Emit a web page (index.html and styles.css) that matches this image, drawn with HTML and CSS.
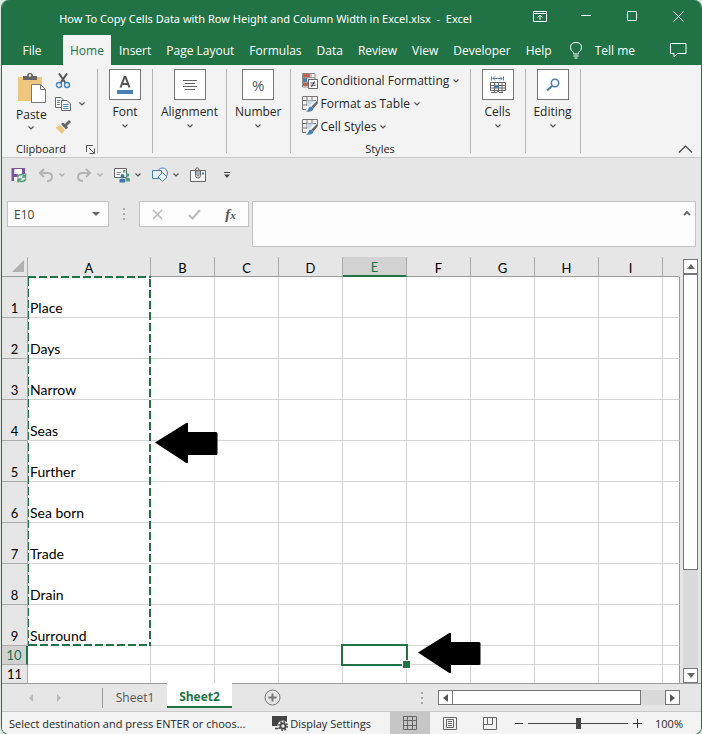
FILE: index.html
```html
<!DOCTYPE html>
<html lang="en">
<head>
    <meta charset="UTF-8">
    <meta name="viewport" content="width=device-width, initial-scale=1.0">
    <title>Excel</title>
    <link rel="stylesheet" href="styles.css">
</head>
<body>
    <svg class="defs" aria-hidden="true">
        <symbol id="chevron" viewBox="0 0 6 4"><path d="M.5 .5L3 3L5.500 .5" fill="none" stroke="#555" stroke-width="1.200"/></symbol>
        <symbol id="block-arrow" viewBox="0 0 64 42"><path d="M1 20.500L31.500 1.500Q34 0 34 2V10H62Q63.500 10 63.500 11.500V31.500Q63.500 33 62 33H34V40Q34 42 31.500 40.500Z" fill="#000"/></symbol>
        <symbol id="table-brush" viewBox="0 0 16 16">
            <path d="M.5 .5H15.500V5M.5 .5V13.500H4M.5 4.500H14M.5 9H7M5 .5V10M10 .5V6" fill="none" stroke="#777"/>
            <path d="M5 4.500H12L7 10H5Z" fill="#c3d9ee"/>
            <path d="M15.500 4.500L9.500 10.500L11.500 12.500L16 7Z" fill="#666"/>
            <path d="M9 10.500Q12 11.500 11 14Q9 16.500 4 15.500Q6.500 14.500 6.500 12.500Q7 10.500 9 10.500Z" fill="#4a7eb5"/>
        </symbol>
    </svg>

    <div class="window">
        <div class="titlebar">
            <div class="title">How To Copy Cells Data with Row Height and Column Width in Excel.xlsx&nbsp; -&nbsp; Excel</div>
            <button class="win-btn" aria-label="Ribbon display options"><svg width="14" height="12" viewBox="0 0 14 12" fill="none" stroke="#fff"><path d="M.5 1.500H13.500V11.500H.5ZM.5 3.500H13.500M7 10V5.500M4.500 7.500L7 5L9.500 7.500"/></svg></button>
            <button class="win-btn" aria-label="Minimize"><svg width="10" height="10" viewBox="0 0 10 10" stroke="#fff"><path d="M0 4.500H10"/></svg></button>
            <button class="win-btn" aria-label="Maximize"><svg width="10" height="10" viewBox="0 0 10 10" fill="none" stroke="#fff"><path d="M.5 .5H9.500V9.500H.5Z"/></svg></button>
            <button class="win-btn" aria-label="Close"><svg width="11" height="11" viewBox="0 0 11 11" stroke="#fff"><path d="M.5 .5L10.500 10.500M10.500 .5L.5 10.500"/></svg></button>
        </div>

        <div class="tabs">
            <button class="tab file">File</button>
            <button class="tab active">Home</button>
            <button class="tab">Insert</button>
            <button class="tab">Page Layout</button>
            <button class="tab">Formulas</button>
            <button class="tab">Data</button>
            <button class="tab">Review</button>
            <button class="tab">View</button>
            <button class="tab">Developer</button>
            <button class="tab">Help</button>
            <button class="tab tell-me"><svg width="12" height="17" viewBox="0 0 12 17" fill="none" stroke="#fff"><path d="M3.500 12V10.500Q.5 8.500 .5 5.500Q.5 .5 6 .5Q11.500 .5 11.500 5.500Q11.500 8.500 8.500 10.500V12ZM3.500 14H8.500M4.500 16H7.500"/></svg>Tell me</button>
            <button class="comment" aria-label="Comments"><svg width="17" height="15" viewBox="0 0 17 15" fill="none" stroke="#fff"><path d="M.5 .5H16V10.500H7.500L4 14V10.500H.5Z"/></svg></button>
        </div>

        <div class="ribbon">
            <div class="group clipboard">
                <div class="clip-tools">
                    <button class="paste">
                        <svg width="29" height="31" viewBox="0 0 29 31">
                            <path d="M1 4H25V28H1Z" fill="#edc77d"/>
                            <path d="M6 3H10Q10 0 13 0T16 3H20V7H6Z" fill="#666"/>
                            <circle cx="13" cy="2.500" r="1.200" fill="#f3f3f3"/>
                            <path d="M14.500 11.500H23.500L28.500 16.500V29.500H14.500Z" fill="#fff" stroke="#777"/>
                            <path d="M23.500 11.500V16.500H28.500" fill="none" stroke="#777"/>
                        </svg>
                        <span>Paste</span>
                        <svg class="chev"><use href="#chevron"/></svg>
                    </button>
                    <div class="clip-side">
                        <button aria-label="Cut"><svg width="16" height="16" viewBox="0 0 16 16" fill="none">
                            <path d="M4 .5L10.500 10M12 .5L5.500 10" stroke="#555" stroke-width="2"/>
                            <circle cx="4" cy="12" r="2.500" stroke="#4a86c0" stroke-width="1.400"/><circle cx="12" cy="12" r="2.500" stroke="#4a86c0" stroke-width="1.400"/>
                        </svg></button>
                        <button aria-label="Copy"><svg width="16" height="16" viewBox="0 0 16 16" fill="#fff" stroke="#666">
                            <path d="M.5 1.500H6L8.500 4V11.500H.5Z"/><path d="M6.500 4.500H12L15.500 8V14.500H6.500Z"/>
                            <path d="M2 4.500H5M2 6.500H5M2 8.500H5M8 8.500H13.500M8 10.500H13.500M8 12.500H13.500" stroke="#4a86c0"/>
                        </svg><svg class="chev"><use href="#chevron"/></svg></button>
                        <button aria-label="Format Painter"><svg width="16" height="16" viewBox="0 0 16 16">
                            <path d="M5 6L10 11L7 15L.5 8.500Z" fill="#edc77d"/>
                            <path d="M6 5L8 3.500L10 5L14 1L16 3L12 7L13 8.500L11 10.500Z" fill="#666"/>
                        </svg></button>
                    </div>
                </div>
                <div class="group-label">Clipboard
                    <button class="launcher" aria-label="Clipboard settings"><svg width="9" height="9" viewBox="0 0 9 9" fill="none" stroke="#555"><path d="M.5 7V.5H7M3 3L8 8M8.500 3.500V8.500H3.500"/></svg></button>
                </div>
            </div>
            <div class="group narrow">
                <button class="big"><span class="box"><svg width="18" height="20" viewBox="0 0 18 20"><path d="M4.500 12.500L8.500 2H9.500L13.500 12.500M6 9H12" fill="none" stroke="#555" stroke-width="2"/><path d="M1 15H17V19H1Z" fill="#4a7fb5"/></svg></span>Font<svg class="chev"><use href="#chevron"/></svg></button>
            </div>
            <div class="group">
                <button class="big"><span class="box"><svg width="14" height="12" viewBox="0 0 14 12" stroke="#666"><path d="M0 1.500H14M2 4.500H12M0 7.500H14M2 10.500H12"/></svg></span>Alignment<svg class="chev"><use href="#chevron"/></svg></button>
            </div>
            <div class="group">
                <button class="big"><span class="box percent">%</span>Number<svg class="chev"><use href="#chevron"/></svg></button>
            </div>
            <div class="group styles">
                <button class="row"><svg width="16" height="16" viewBox="0 0 16 16">
                    <path d="M.5 .5H13V14H.5Z" fill="#fff" stroke="#888"/>
                    <path d="M1 1H8V4.500H1ZM1 9.500H6V13H1Z" fill="#c0604f"/><path d="M1 5H5V9H1Z" fill="#4a7fb5"/>
                    <path d="M9 1V5M.5 4.800H13M.5 9.200H6" stroke="#888" fill="none"/>
                    <path d="M6.500 6.500H15.500V15.500H6.500Z" fill="#fff" stroke="#666"/><path d="M8.500 10H13.500M8.500 12.200H13.500M12.500 8.500L9.500 14" stroke="#444"/>
                </svg>Conditional Formatting<svg class="chev"><use href="#chevron"/></svg></button>
                <button class="row"><svg width="16" height="16"><use href="#table-brush"/></svg>Format as Table<svg class="chev"><use href="#chevron"/></svg></button>
                <button class="row"><svg width="16" height="16"><use href="#table-brush"/></svg>Cell Styles<svg class="chev"><use href="#chevron"/></svg></button>
                <div class="group-label">Styles</div>
            </div>
            <div class="group narrow">
                <button class="big"><span class="box"><svg width="16" height="18" viewBox="0 0 16 18" fill="none">
                    <path d="M1.500 .5V4.500M13.500 .5V4.500M3 2.500H12M5 .5L3 2.500L5 4.500M10 .5L12 2.500L10 4.500" stroke="#4a7fb5"/>
                    <path d="M.5 6.500H15.500V14.500H.5ZM.5 9.500H15.500M.5 12H15.500M4.500 6.500V16M8.500 6.500V14.500M12 6.500V16M1 16.500H7L8 15L9 16.500H13" stroke="#666"/>
                    <path d="M4.500 9H8.500V12H4.500Z" fill="#4a7fb5"/>
                </svg></span>Cells<svg class="chev"><use href="#chevron"/></svg></button>
            </div>
            <div class="group narrow">
                <button class="big"><span class="box"><svg width="14" height="14" viewBox="0 0 14 14" fill="none" stroke="#4a7fb5"><circle cx="9" cy="5" r="3.700" stroke-width="1.600"/><path d="M6 8L1 12.500" stroke-width="2.200"/></svg></span>Editing<svg class="chev"><use href="#chevron"/></svg></button>
            </div>
            <button class="collapse" aria-label="Collapse the ribbon"><svg width="15" height="8" viewBox="0 0 15 8" fill="none" stroke="#444" stroke-width="1.200"><path d="M1 7.500L7.500 1L14 7.500"/></svg></button>
        </div>

        <div class="quick">
            <button aria-label="Save"><svg width="16" height="16" viewBox="0 0 16 16">
                <path d="M.5 1H14V7H11V2.500H3.500V7H7L5 14H.5Z" fill="#8052a0"/><path d="M3.500 2H11V7H3.500Z" fill="#fff"/><path d="M3 10H6V14H3Z" fill="#fff"/>
                <path d="M6.500 10.500Q7 7.500 10.500 7.500Q13 7.500 14 9.500M14.500 6.500V10H11M15 11.500Q14 14.500 11 14.500Q8 14.500 7.500 12.500M7 15.500V12H10.500" fill="none" stroke="#4fa07c" stroke-width="1.500"/>
            </svg></button>
            <button class="split" aria-label="Undo"><svg width="16" height="14" viewBox="0 0 16 14" fill="none" stroke="#b4b4b4" stroke-width="2"><path d="M6 1L2 5L6 9M2 5H9.500Q14 5 14 9T9 13"/></svg><svg class="chev off"><use href="#chevron"/></svg></button>
            <button class="split" aria-label="Redo"><svg width="16" height="14" viewBox="0 0 16 14" fill="none" stroke="#b4b4b4" stroke-width="2"><path d="M10 1L14 5L10 9M14 5H6.500Q2 5 2 9T7 13"/></svg><svg class="chev off"><use href="#chevron"/></svg></button>
            <button class="split" aria-label="Mail merge"><svg width="16" height="16" viewBox="0 0 16 16">
                <path d="M.5 1.500H12.500V10.500H.5Z" fill="#fff" stroke="#666"/><path d="M2.500 5.500H7M2.500 7.500H6" stroke="#888"/><path d="M9 3H11.500V5.500H9Z" fill="#4fa07c"/>
                <circle cx="8.500" cy="9" r="2" fill="#3f73a8"/><path d="M5.500 15.500V13Q5.500 11.500 8.500 11.500T11 13V15.500Z" fill="#3f73a8"/>
                <circle cx="13.500" cy="8" r="1.800" fill="#4fa07c"/><path d="M11.500 14.500V11.500Q12 10.500 13.500 10.500T16 12V14.500Z" fill="#4fa07c"/>
            </svg><svg class="chev"><use href="#chevron"/></svg></button>
            <button class="split" aria-label="Shapes"><svg width="16" height="16" viewBox="0 0 16 16" fill="#e9f1f9" stroke="#4a7fb5">
                <circle cx="10.500" cy="6" r="5"/><path d="M.5 3.500H9.500V11.500H.5Z"/><path d="M10.500 5.500L15 10L10.500 14.500L6 10Z"/>
            </svg><svg class="chev"><use href="#chevron"/></svg></button>
            <button aria-label="Attach"><svg width="16" height="15" viewBox="0 0 16 15" fill="none" stroke="#666">
                <path d="M.5 3.500H15.500V14.500H.5Z" fill="#f5f5f5"/><path d="M10.500 3V8.500Q10.500 11 8 11T5.500 8.500V3Q5.500 .8 7.200 .8T9 3V8Q9 9 8 9T7 8V3.500"/><path d="M12 6.500H14" stroke="#4a7fb5" stroke-width="2"/>
            </svg></button>
            <button class="customize" aria-label="Customize toolbar"><svg width="6" height="6" viewBox="0 0 6 6"><path d="M0 .5H6" stroke="#444"/><path d="M0 2.500H6L3 6Z" fill="#444"/></svg></button>
        </div>

        <div class="formula-bar">
            <div class="name-box">
                <input type="text" value="E10" aria-label="Name box">
                <button aria-label="Named ranges"><svg width="8" height="4" viewBox="0 0 8 4"><path d="M0 0H8L4 4Z" fill="#666"/></svg></button>
            </div>
            <div class="grip"></div>
            <div class="fx-box">
                <button aria-label="Cancel"><svg width="11" height="11" viewBox="0 0 11 11" stroke="#bbb" stroke-width="1.600"><path d="M1 1L10 10M10 1L1 10"/></svg></button>
                <button aria-label="Enter"><svg width="13" height="11" viewBox="0 0 13 11" fill="none" stroke="#bbb" stroke-width="2"><path d="M1 6L4.500 9.500L12 1"/></svg></button>
                <button class="fx" aria-label="Insert function">f<small>x</small></button>
            </div>
            <div class="formula">
                <input type="text" aria-label="Formula">
                <button aria-label="Collapse formula bar"><svg width="8" height="6" viewBox="0 0 8 6" fill="none" stroke="#666" stroke-width="1.800"><path d="M1 5L4 2L7 5"/></svg></button>
            </div>
        </div>

        <div class="sheet">
            <div class="grid">
                <table>
                    <colgroup><col class="col-head"><col class="col-a"><col class="col"><col class="col"><col class="col"><col class="col"><col class="col"><col class="col"><col class="col"><col class="col"><col></colgroup>
                    <thead>
                        <tr><th class="corner"><svg width="12" height="12" viewBox="0 0 12 12"><path d="M12 0V12H0Z" fill="#b1b1b1"/></svg></th><th>A</th><th>B</th><th>C</th><th>D</th><th class="on">E</th><th>F</th><th>G</th><th>H</th><th>I</th><th></th></tr>
                    </thead>
                    <tbody>
                        <tr><th>1</th><td>Place</td><td></td><td></td><td></td><td></td><td></td><td></td><td></td><td></td><td></td></tr>
                        <tr><th>2</th><td>Days</td><td></td><td></td><td></td><td></td><td></td><td></td><td></td><td></td><td></td></tr>
                        <tr><th>3</th><td>Narrow</td><td></td><td></td><td></td><td></td><td></td><td></td><td></td><td></td><td></td></tr>
                        <tr><th>4</th><td>Seas</td><td></td><td></td><td></td><td></td><td></td><td></td><td></td><td></td><td></td></tr>
                        <tr><th>5</th><td>Further</td><td></td><td></td><td></td><td></td><td></td><td></td><td></td><td></td><td></td></tr>
                        <tr><th>6</th><td>Sea born</td><td></td><td></td><td></td><td></td><td></td><td></td><td></td><td></td><td></td></tr>
                        <tr><th>7</th><td>Trade</td><td></td><td></td><td></td><td></td><td></td><td></td><td></td><td></td><td></td></tr>
                        <tr><th>8</th><td>Drain</td><td></td><td></td><td></td><td></td><td></td><td></td><td></td><td></td><td></td></tr>
                        <tr><th>9</th><td>Surround</td><td></td><td></td><td></td><td></td><td></td><td></td><td></td><td></td><td></td></tr>
                        <tr class="short"><th class="on">10</th><td></td><td></td><td></td><td></td><td></td><td></td><td></td><td></td><td></td><td></td></tr>
                        <tr class="short"><th>11</th><td></td><td></td><td></td><td></td><td></td><td></td><td></td><td></td><td></td><td></td></tr>
                    </tbody>
                </table>
                <!-- copied range A1:A9 -->
                <svg class="ants" width="123" height="370" viewBox="0 0 123 370" stroke="#217346" fill="none">
                    <path d="M0 0V370M0 1H123M122 0V370M0 369H123" stroke="#fff" stroke-width="2"/>
                    <path d="M.5 2V370" stroke-dasharray="8 3"/>
                    <path d="M0 1H123" stroke-width="2" stroke-dasharray="8 3"/>
                    <path d="M122 3V370M1 369H123" stroke-width="2" stroke-dasharray="8 3"/>
                </svg>
                <div class="selection"></div>
                <svg class="arrow range-arrow"><use href="#block-arrow"/></svg>
                <svg class="arrow cell-arrow"><use href="#block-arrow"/></svg>
            </div>
            <div class="vscroll">
                <button aria-label="Scroll up"><svg width="8" height="5" viewBox="0 0 8 5"><path d="M0 5L4 0L8 5Z" fill="#666"/></svg></button>
                <div class="thumb"></div>
                <div class="track"></div>
                <button aria-label="Scroll down"><svg width="8" height="5" viewBox="0 0 8 5"><path d="M0 0L4 5L8 0Z" fill="#666"/></svg></button>
            </div>
        </div>

        <div class="sheet-tabs">
            <button class="nav" aria-label="Previous sheet"><svg width="4" height="8" viewBox="0 0 4 8"><path d="M4 0V8L0 4Z" fill="#bbb"/></svg></button>
            <button class="nav" aria-label="Next sheet"><svg width="4" height="8" viewBox="0 0 4 8"><path d="M0 0V8L4 4Z" fill="#bbb"/></svg></button>
            <button class="sheet-tab">Sheet1</button>
            <button class="sheet-tab active">Sheet2</button>
            <button class="add" aria-label="New sheet"><svg width="17" height="17" viewBox="0 0 17 17" fill="none" stroke="#777"><circle cx="8.500" cy="8.500" r="7.500"/><path d="M8.500 4.500V12.500M4.500 8.500H12.500" stroke-width="2"/></svg></button>
            <div class="grip"></div>
            <div class="hscroll">
                <button aria-label="Scroll left"><svg width="5" height="8" viewBox="0 0 5 8"><path d="M5 0V8L0 4Z" fill="#555"/></svg></button>
                <div class="thumb"></div>
                <div class="track"></div>
                <button aria-label="Scroll right"><svg width="5" height="8" viewBox="0 0 5 8"><path d="M0 0V8L5 4Z" fill="#555"/></svg></button>
            </div>
        </div>

        <div class="status">
            <div class="message">Select destination and press ENTER or choos...</div>
            <button class="display"><svg width="16" height="16" viewBox="0 0 16 16">
                <path d="M0 1H15V7Q9 5 7 11H0Z" fill="#444"/><path d="M3 13.500H7" stroke="#444" stroke-width="1.500"/>
                <circle cx="11" cy="11" r="4" fill="none" stroke="#f3f3f3" stroke-width="3"/>
                <circle cx="11" cy="11" r="2.600" fill="none" stroke="#444" stroke-width="1.800"/><circle cx="11" cy="11" r="4.200" fill="none" stroke="#444" stroke-width="1.600" stroke-dasharray="1.700 1.600"/>
            </svg>Display Settings</button>
            <button class="view active" aria-label="Normal"><svg width="14" height="14" viewBox="0 0 14 14" fill="none" stroke="#666"><path d="M.5 .5H13.500V13.500H.5ZM.5 4.500H13.500M.5 9.500H13.500M4.500 .5V13.500M9.500 .5V13.500"/></svg></button>
            <button class="view" aria-label="Page Layout"><svg width="14" height="13" viewBox="0 0 14 13" fill="none" stroke="#666"><path d="M.5 .5H13.500V12.500H.5ZM3.500 2.500H10.500V10.500H3.500ZM5 4.500H9M5 6.500H9M5 8.500H9"/></svg></button>
            <button class="view" aria-label="Page Break Preview"><svg width="14" height="13" viewBox="0 0 14 13" fill="none" stroke="#666"><path d="M.5 .5H13.500V12.500H.5ZM4.500 .5V7.500H9.500V.5M.5 7.500H4.500" /></svg></button>
            <div class="zoom">
                <button aria-label="Zoom out"><svg width="8" height="9" viewBox="0 0 8 9" stroke="#333"><path d="M0 4.500H8"/></svg></button>
                <input type="range" min="0" max="100" value="50" aria-label="Zoom">
                <button aria-label="Zoom in"><svg width="9" height="9" viewBox="0 0 9 9" stroke="#333"><path d="M0 4.500H9M4.500 0V9"/></svg></button>
                <span class="percent-value">100%</span>
            </div>
        </div>
    </div>
</body>
</html>
```
FILE: styles.css
```css
* {
    box-sizing: border-box;
}

body {
    margin: 0;
    background: #dce8e0;
    font-family: "Open Sans", "Noto Sans", sans-serif;
    font-size: 12px;
    color: #262626;
}

button, input {
    font: inherit;
    color: inherit;
    margin: 0;
    padding: 0;
    border: none;
    background: none;
}

svg {
    display: block;
    flex: none;
}

.defs {
    position: absolute;
    width: 0;
    height: 0;
}

.window {
    margin-left: 1px;
    border: 1px solid #217346;
    border-top: none;
    border-radius: 8px;
    overflow: hidden;
    background: #e6e6e6;
}

.chev {
    width: 6px;
    height: 4px;
}

.chev.off {
    opacity: 0.4;
}

/* title bar */
.titlebar {
    display: flex;
    height: 35px;
    background: #217346;
    color: #fff;
}

.title {
    flex: 1;
    padding-left: 12px;
    text-align: center;
    line-height: 37px;
    font-family: "Noto Sans", sans-serif;
    font-size: 11px;
    white-space: nowrap;
}

.win-btn {
    width: 46px;
    display: flex;
    align-items: center;
    justify-content: center;
    padding-bottom: 3px;
}

.tabs {
    display: flex;
    height: 30px;
    background: #217346;
}

.tab {
    padding: 0 7px;
    margin-right: 1px;
    color: #fff;
    white-space: nowrap;
}

.tab.file {
    width: 60px;
}

.tab.active {
    background: #f3f3f3;
    color: #217346;
}

.tell-me {
    display: flex;
    align-items: center;
    gap: 13px;
    padding-left: 10px;
}

.comment {
    margin-left: auto;
    padding-right: 14px;
}

/* ribbon */
.ribbon {
    display: flex;
    height: 93px;
    padding: 4px 0;
    background: #f3f3f3;
    border-bottom: 1px solid #c8c8c8;
}

.group {
    display: flex;
    flex-direction: column;
    padding: 0 8px;
    border-right: 1px solid #b5b5b5;
}

.group.narrow {
    width: 55px;
}

.group-label {
    margin-top: auto;
    font-size: 11px;
    line-height: 12px;
    text-align: center;
    margin-bottom: -2px;
}

.clipboard {
    width: 96px;
    padding: 0 2px 0 14px;
}

.clip-tools {
    display: flex;
    gap: 8px;
}

.paste {
    display: flex;
    flex-direction: column;
    align-items: center;
    padding-top: 4px;
    line-height: 22px;
}

.clip-side {
    display: flex;
    flex-direction: column;
}

.clip-side button {
    display: flex;
    align-items: center;
    gap: 8px;
    height: 23px;
}

.clipboard .group-label {
    display: flex;
    justify-content: space-between;
    align-items: center;
}

.big {
    display: flex;
    flex-direction: column;
    align-items: center;
    line-height: 24px;
}

.box {
    width: 32px;
    height: 31px;
    display: flex;
    align-items: center;
    justify-content: center;
    background: #fff;
    border: 1px solid #777;
}

.percent {
    font-size: 15px;
    color: #555;
}

.styles {
    width: 180px;
    padding: 0 11px;
}

.row {
    display: flex;
    align-items: center;
    gap: 3px;
    height: 23px;
    white-space: nowrap;
}

.row .chev {
    margin-left: 1px;
}

.collapse {
    margin-left: auto;
    align-self: flex-end;
    padding-right: 8px;
}

/* quick access toolbar */
.quick {
    display: flex;
    align-items: center;
    gap: 11px;
    height: 35px;
    padding: 0 0 2px 9px;
}

.quick .split {
    display: flex;
    align-items: center;
    gap: 5px;
}

.customize {
    margin-left: 7px;
}

/* formula bar */
.formula-bar {
    display: flex;
    align-items: flex-start;
    height: 64px;
    padding: 8px 5px;
}

.name-box, .fx-box {
    display: flex;
    align-items: center;
    height: 26px;
    background: #fdfdfd;
    border: 1px solid #c3c3c3;
}

.name-box {
    width: 102px;
}

.name-box input {
    flex: 1;
    min-width: 0;
    padding-left: 6px;
    color: #444;
}

.name-box button {
    padding: 0 8px;
}

.grip {
    width: 2px;
    height: 12px;
    background: repeating-linear-gradient(#aaa 0 2px, transparent 2px 5px);
}

.formula-bar .grip {
    margin: 7px 14px;
}

.fx-box {
    width: 110px;
    justify-content: space-around;
}

.fx {
    font-family: "Liberation Serif", serif;
    font-style: italic;
    font-weight: bold;
    font-size: 15px;
    color: #555;
}

.fx small {
    font-size: 11px;
}

.formula {
    flex: 1;
    display: flex;
    align-items: flex-start;
    height: 46px;
    margin-left: 3px;
    background: #fdfdfd;
    border: 1px solid #c3c3c3;
}

.formula input {
    flex: 1;
    min-width: 0;
    height: 24px;
    padding: 0 8px;
}

.formula button {
    padding: 8px 4px;
}

/* grid */
.sheet {
    display: flex;
    gap: 3px;
    padding-right: 3px;
    border-bottom: 1px solid #9b9b9b;
}

.grid {
    flex: 1;
    min-width: 0;
    position: relative;
}

table {
    width: 100%;
    table-layout: fixed;
    border-collapse: separate;
    border-spacing: 0;
    font-family: Lato, sans-serif;
    font-size: 14px;
    line-height: 18px;
    color: #000;
}

.col-head {
    width: 26px;
}

.col-a {
    width: 123px;
}

.col {
    width: 64px;
}

th, td {
    padding: 0;
    height: 41px;
    border-right: 1px solid #d4d4d4;
    border-bottom: 1px solid #d4d4d4;
    vertical-align: bottom;
}

th {
    font-size: 13px;
    font-weight: normal;
    background: #e6e6e6;
    border-color: #ababab;
}

td {
    padding-left: 2px;
    background: #fff;
}

td:last-child {
    border-right-color: #9b9b9b;
}

thead th {
    height: 20px;
    line-height: 16px;
    border-bottom-color: #9b9b9b;
}

thead th:last-child {
    border-right-color: #e6e6e6;
}

.short th, .short td {
    height: 19px;
}

.short:last-child th, .short:last-child td {
    height: 18px;
    border-bottom: none;
}

th.on {
    background: #d2d2d2;
    color: #217346;
}

thead th.on {
    border-bottom: 2px solid #217346;
}

tbody th.on {
    border-right: 2px solid #217346;
}

.corner svg {
    margin: 0 0 4px 10px;
}

.ants {
    position: absolute;
    left: 26px;
    top: 19px;
}

.selection {
    position: absolute;
    left: 339px;
    top: 387px;
    width: 67px;
    height: 22px;
    border: 2px solid #217346;
}

.selection::after {
    content: "";
    position: absolute;
    right: -5px;
    bottom: -5px;
    width: 7px;
    height: 7px;
    background: #217346;
    border: 1px solid #fff;
}

.arrow {
    position: absolute;
    width: 64px;
    height: 42px;
}

.range-arrow {
    left: 152px;
    top: 165px;
}

.cell-arrow {
    left: 415px;
    top: 375px;
}

/* scroll bars */
.vscroll {
    display: flex;
    flex-direction: column;
    width: 15px;
    padding-top: 2px;
}

.vscroll button, .hscroll button {
    width: 15px;
    height: 15px;
    display: flex;
    align-items: center;
    justify-content: center;
    background: #fff;
    border: 1px solid #777;
}

.thumb {
    background: #fff;
    border: 1px solid #777;
}

.track {
    background: #dadada;
}

.vscroll .thumb {
    flex: 3;
}

.vscroll .track {
    flex: 1;
}

.hscroll {
    display: flex;
    width: 242px;
}

.hscroll .thumb {
    flex: 1;
    margin-left: -1px;
}

.hscroll .track {
    width: 24px;
}

/* sheet tabs */
.sheet-tabs {
    display: flex;
    align-items: center;
    height: 27px;
    padding-right: 21px;
}

.nav {
    width: 28px;
    display: flex;
    justify-content: center;
}

.nav:first-child {
    margin-left: 15px;
}

.sheet-tab {
    width: 65px;
    height: 20px;
    color: #555;
}

.nav + .sheet-tab {
    margin-left: 29px;
    border-left: 1px solid #999;
}

.sheet-tab.active {
    height: 25px;
    align-self: flex-start;
    margin-top: -1px;
    padding-top: 4px;
    background: #fff;
    border-bottom: 2px solid #217346;
    color: #217346;
    font-weight: bold;
}

.add {
    margin: 0 auto 0 32px;
}

.sheet-tabs .grip {
    margin-right: 15px;
}

/* status bar */
.status {
    display: flex;
    align-items: center;
    height: 23px;
    background: #f3f3f3;
    border-top: 1px solid #c8c8c8;
    font-size: 11px;
    white-space: nowrap;
}

.message {
    padding-left: 7px;
    flex: 1;
}

.display {
    display: flex;
    align-items: center;
    gap: 2px;
    margin-right: 19px;
}

.view {
    display: flex;
    align-items: center;
    justify-content: center;
    width: 40px;
    height: 22px;
}

.view.active {
    background: #c6c6c6;
}

.zoom {
    display: flex;
    align-items: center;
    gap: 5px;
    padding: 0 18px 0 5px;
}

.zoom input {
    appearance: none;
    width: 100px;
    height: 12px;
    background: linear-gradient(#444, #444) center / 100% 1px no-repeat;
}

.zoom input::-webkit-slider-thumb {
    appearance: none;
    width: 5px;
    height: 11px;
    background: #444;
}

.percent-value {
    margin-left: 8px;
}
```
